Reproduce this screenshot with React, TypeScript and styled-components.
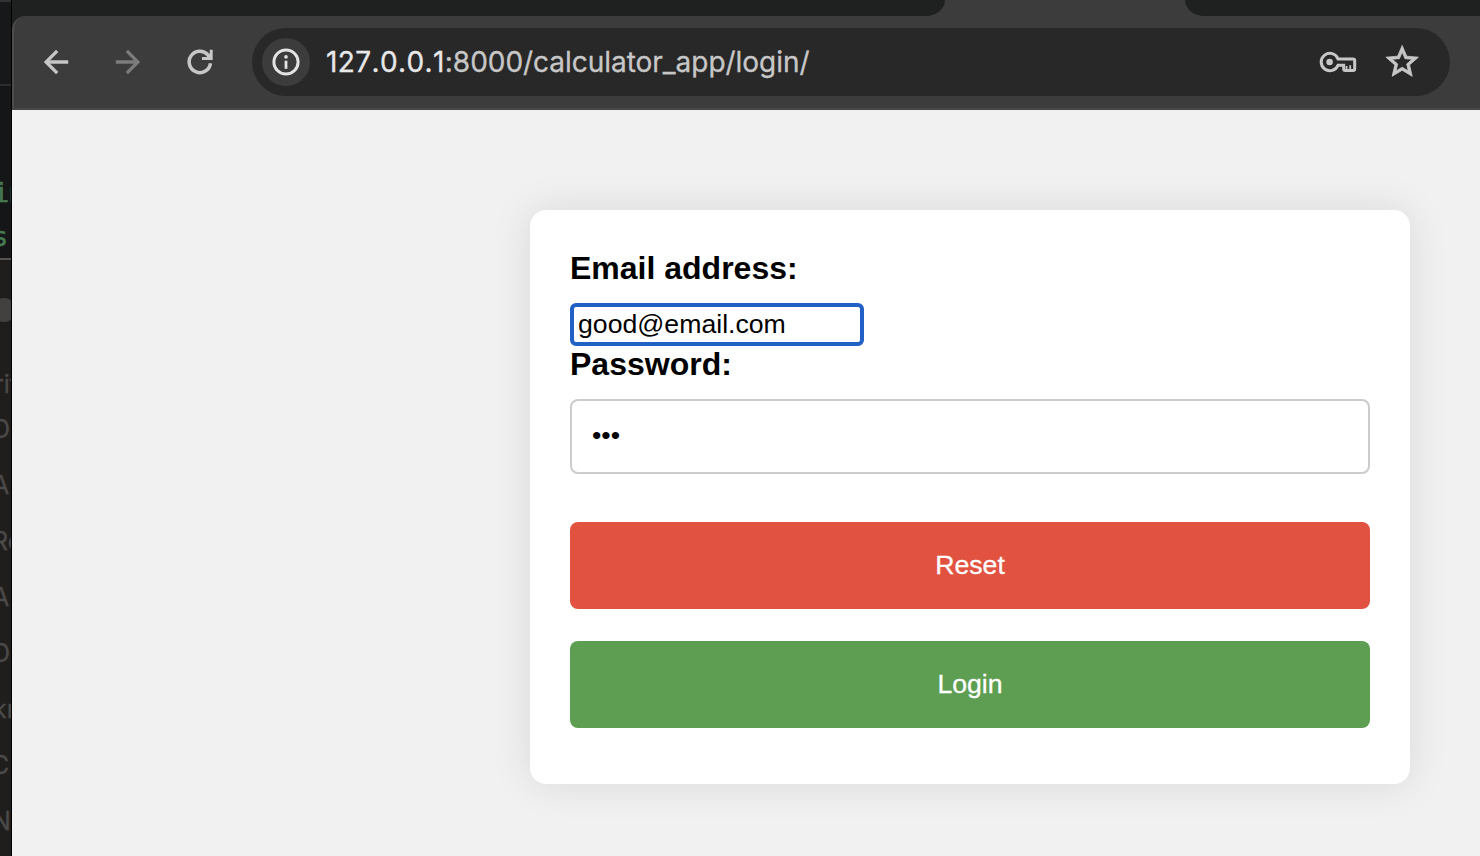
import React from "react";
import styled, { createGlobalStyle } from "styled-components";

const GlobalStyle = createGlobalStyle`
  * { box-sizing: border-box; }
  body { margin: 0; background: #f1f1f1; font-family: "Liberation Sans", Arial, sans-serif; }
`;

const Desktop = styled.div`
  display: flex;
  width: 1480px;
  height: 856px;
  overflow: hidden;
`;

const BackgroundWindow = styled.aside`
  display: flex;
  flex-direction: column;
  flex: 0 0 12px;
  overflow: hidden;
  border-right: 1px solid #000;
  background: #1f1e1c;
`;

const CodePane = styled.div`
  flex: 0 0 260px;
  padding-top: 84px;
  overflow: hidden;
  background: linear-gradient(#303234 0 2px, #17181a 2px 84px, #2a2c2e 84px 86px, #141618 86px);
  border-bottom: 2px solid #555453;
`;

const CodeLine = styled.div<{ $shift: number }>`
  height: 44px;
  margin-left: ${(p) => p.$shift}px;
  font: 27px/44px "DejaVu Sans Mono", monospace;
  letter-spacing: -3px;
  color: #467a50;
  -webkit-text-stroke: 0.5px #467a50;
  white-space: nowrap;
  &:first-child { margin-top: 87px; }
`;

const Avatar = styled.div`
  flex: 0 0 24px;
  width: 24px;
  margin: 38px 0 45px -8px;
  border-radius: 50%;
  background: #42413f;
`;

const ListLine = styled.div<{ $shift: number; $height?: number }>`
  flex: 0 0 ${(p) => p.$height ?? 56}px;
  margin-left: ${(p) => p.$shift}px;
  font: 25px/${(p) => p.$height ?? 56}px Inter, sans-serif;
  color: #4b4a48;
  -webkit-text-stroke: 0.3px #4b4a48;
  white-space: nowrap;
`;

const Browser = styled.main`
  display: flex;
  flex: 1;
  flex-direction: column;
  min-width: 0;
`;

const Chrome = styled.header`
  flex: 0 0 110px;
  background: #3c3c3c;
  border-bottom: 2px solid #474747;
`;

const TabStrip = styled.div`
  display: flex;
  justify-content: space-between;
  height: 16px;
  background: #3c3c3c;
`;

const InactiveTabs = styled.div<{ $width: number; $side: "left" | "right" }>`
  width: ${(p) => p.$width}px;
  background: #1f2120;
  border-radius: ${(p) => (p.$side === "left" ? "0 0 24px 0 / 0 0 20px 0" : "0 0 0 24px / 0 0 0 20px")};
`;

const Toolbar = styled.div`
  display: flex;
  align-items: center;
  height: 92px;
  padding-right: 30px;
  border-left: 2px solid #4d4d4d;
  border-top-left-radius: 14px;
  background: #3c3c3c;
`;

const ToolbarCorner = styled.div`
  background: #1f2120;
`;

const NavButtons = styled.nav`
  display: flex;
  gap: 36px;
  padding-left: 24px;
  width: 238px;
`;

const Icon = styled.svg<{ $color?: string }>`
  display: block;
  flex: none;
  color: ${(p) => p.$color ?? "#c7c7c7"};
`;

const AddressBar = styled.div`
  display: flex;
  flex: 1;
  align-items: center;
  height: 68px;
  padding: 0 28.5px 0 10px;
  border-radius: 34px;
  background: #282828;
`;

const SiteInfo = styled.div`
  display: grid;
  place-items: center;
  width: 48px;
  height: 48px;
  border-radius: 50%;
  background: #3c3c3c;
`;

const Url = styled.div`
  flex: 1;
  margin-left: 16px;
  font: 400 28px/40px Inter, sans-serif;
  letter-spacing: -0.03px;
  white-space: nowrap;
  color: #c7c7c7;
  -webkit-text-stroke: 0.3px currentColor;
`;

const Host = styled.span`
  color: #e8e8e8;
  font-kerning: none;
  letter-spacing: 0.4px;
`;

const Page = styled.div`
  flex: 1;
  padding: 100px 70px 0 518px;
  background: #f1f1f1;
`;

const Card = styled.form`
  padding: 40px 40px 56px;
  border-radius: 16px;
  background: #fff;
  box-shadow: 0 0 40px rgba(0, 0, 0, 0.1);
`;

const Label = styled.label`
  display: block;
  height: 37px;
  margin-bottom: 16px;
  font-size: 32px;
  font-weight: 700;
  line-height: 37px;
  color: #000;
`;

const EmailInput = styled.input`
  display: block;
  width: 294px;
  height: 43px;
  padding: 0 4px 1px;
  border: 4px solid #2160c4;
  border-radius: 6px;
  outline: none;
  background: #fff;
  color: #000;
  font: 26.667px "Liberation Sans", Arial, sans-serif;
`;

const PasswordInput = styled.input`
  display: block;
  width: 100%;
  height: 75px;
  margin-bottom: 48px;
  padding: 0 20px 2px;
  border: 2px solid #ccc;
  border-radius: 8px;
  outline: none;
  background: #fff;
  color: #000;
  font: 26.667px "Liberation Sans", Arial, sans-serif;
`;

const Button = styled.button<{ $tone: string }>`
  display: block;
  width: 100%;
  height: 87px;
  padding: 0;
  border: 0;
  border-radius: 8px;
  background: ${(p) => p.$tone};
  color: #fff;
  font: 26.667px "Liberation Sans", Arial, sans-serif;
  -webkit-text-stroke: 0.3px #fff;
  & + & { margin-top: 32px; }
`;

const ArrowIcon = ({ forward = false }: { forward?: boolean }) => (
  <Icon width="36" height="36" viewBox="0 0 24 24" $color={forward ? "#7c7c7c" : undefined}>
    <path
      fill="currentColor"
      stroke="currentColor"
      strokeWidth="0.3"
      transform={forward ? "matrix(-1 0 0 1 24 0)" : undefined}
      d="M20 11H7.83l5.59-5.59L12 4l-8 8 8 8 1.41-1.41L7.83 13H20z"
    />
  </Icon>
);

const ReloadIcon = () => (
  <Icon width="36" height="36" viewBox="0 0 36 36" fill="none" stroke="currentColor" strokeWidth="3.5">
    <path d="M28.5 19.2A10.7 10.7 0 1 1 25.8 10.7L29 14" />
    <path d="M20 14.5H29.2V5.8" strokeWidth="3" />
    <path d="M23 14.5 29 8.5v6z" fill="currentColor" stroke="none" />
  </Icon>
);

const InfoIcon = () => (
  <Icon width="28" height="28" viewBox="0 0 28 28" $color="#e3e3e3">
    <circle cx="14" cy="14" r="12.1" fill="none" stroke="currentColor" strokeWidth="3" />
    <path d="M12.6 12.7h2.8v8.1h-2.8z" fill="currentColor" />
    <circle cx="14" cy="8.9" r="1.8" fill="currentColor" />
  </Icon>
);

const KeyIcon = () => (
  <Icon width="38" height="24" viewBox="0 0 38 24" fill="none" stroke="currentColor" strokeWidth="3">
    <path d="M19 8.9H34Q35.7 8.9 35.7 10.6V18.8Q35.7 20.5 34 20.5H26.4Q24.7 20.5 24.7 18.8V15.2H19A8.7 8.7 0 1 1 19 8.9z" />
    <circle cx="10.6" cy="12" r="3.3" fill="currentColor" stroke="none" />
    <path d="M27.6 20V16M31.2 20V15.2" strokeWidth="1.8" />
  </Icon>
);

const StarIcon = () => (
  <Icon width="39" height="39" viewBox="0.2 0.5 24 24" fill="currentColor" stroke="currentColor" strokeWidth="0.5">
    <path d="m22 9.24-7.19-.62L12 2 9.19 8.63 2 9.24l5.46 4.73L5.82 21 12 17.27 18.18 21l-1.63-7.03zM12 15.4l-3.76 2.27 1-4.28-3.32-2.88 4.38-.38L12 6.1l1.71 4.04 4.38.38-3.32 2.88 1 4.28z" />
  </Icon>
);

const AddressActions = styled.div`
  display: flex;
  align-items: center;
  gap: 25.5px;
`;

export default function App() {
  return (
    <>
      <GlobalStyle />
      <Desktop>
        <BackgroundWindow>
          <CodePane>
            <CodeLine $shift={-7}>ir</CodeLine>
            <CodeLine $shift={-8}>s:</CodeLine>
          </CodePane>
          <Avatar />
          <ListLine $shift={-6} $height={34}>rit</ListLine>
          <ListLine $shift={-8}>D</ListLine>
          <ListLine $shift={-8}>A</ListLine>
          <ListLine $shift={-8}>Re</ListLine>
          <ListLine $shift={-8}>A</ListLine>
          <ListLine $shift={-8}>D</ListLine>
          <ListLine $shift={-7}>kn</ListLine>
          <ListLine $shift={-9}>C</ListLine>
          <ListLine $shift={-8}>N</ListLine>
        </BackgroundWindow>
        <Browser>
          <Chrome>
            <TabStrip>
              <InactiveTabs $side="left" $width={933} />
              <InactiveTabs $side="right" $width={295} />
            </TabStrip>
            <ToolbarCorner>
              <Toolbar>
                <NavButtons>
                  <ArrowIcon />
                  <ArrowIcon forward />
                  <ReloadIcon />
                </NavButtons>
                <AddressBar>
                  <SiteInfo>
                    <InfoIcon />
                  </SiteInfo>
                  <Url>
                    <Host>127.0.0.1</Host>:8000/calculator_app/login/
                  </Url>
                  <AddressActions>
                    <KeyIcon />
                    <StarIcon />
                  </AddressActions>
                </AddressBar>
              </Toolbar>
            </ToolbarCorner>
          </Chrome>
          <Page>
            <Card>
              <Label htmlFor="email">Email address:</Label>
              <EmailInput id="email" defaultValue="good@email.com" />
              <Label htmlFor="password">Password:</Label>
              <PasswordInput id="password" type="password" defaultValue="abc" />
              <Button type="reset" $tone="#e15241">Reset</Button>
              <Button type="button" $tone="#5d9e52">Login</Button>
            </Card>
          </Page>
        </Browser>
      </Desktop>
    </>
  );
}
